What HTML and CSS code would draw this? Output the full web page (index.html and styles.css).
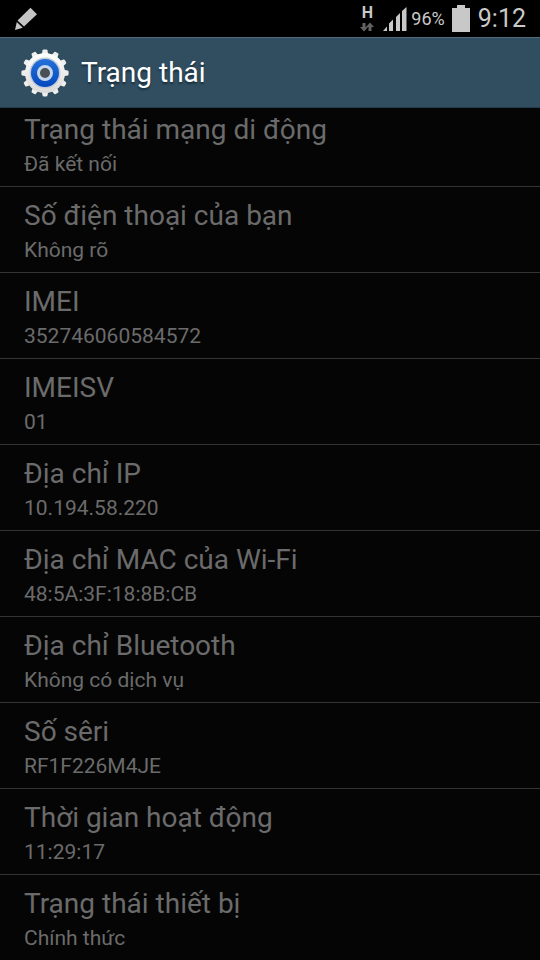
FILE: index.html
```html
<!DOCTYPE html>
<html lang="vi">
<head>
<meta charset="utf-8">
<meta name="viewport" content="width=device-width, initial-scale=1">
<title>Trạng thái</title>
<link rel="stylesheet" href="styles.css">
</head>
<body>
<div class="status-bar">
  <svg class="pen" width="24" height="24" viewBox="0 0 24 24" aria-hidden="true">
    <path fill="#c4c4c4" d="M16.500 .8 23 7.300 10 19.500 3.500 13.500ZM2.800 15 8.800 20.700 1 23Z"/>
  </svg>
  <div class="indicators">
    <div class="network">
      <span class="network-type">H</span>
      <svg width="14" height="10" viewBox="0 0 14 10" aria-hidden="true">
        <path fill="#626262" d="M2.500 1h3v4H8L4 9.500 0 5h2.500ZM8.500 9V5H6l4-4.500L14 5h-2.500v4Z"/>
      </svg>
    </div>
    <svg class="signal" width="24" height="24" viewBox="0 0 24 24" aria-hidden="true">
      <path fill="#c8c8c8" d="M0 24 4 19.500V24ZM6 24V16.500L10 12.500V24ZM13 24V10L17 6V24ZM19 24V4L23.500 0V24Z"/>
    </svg>
    <span class="battery-level">96%</span>
    <svg class="battery" width="18" height="27" viewBox="0 0 18 27" aria-hidden="true">
      <path fill="#c8c8c8" d="M5 0h8v3h5v24H0V3h5Z"/>
    </svg>
    <time class="clock">9:12</time>
  </div>
</div>
<header class="action-bar">
  <svg class="gear" width="48" height="48" viewBox="0 0 48 48" aria-hidden="true">
    <defs>
      <linearGradient id="metal" x1="0" y1="0" x2="0" y2="1">
        <stop offset="0" stop-color="#fff"/><stop offset="1" stop-color="#dcdad8"/>
      </linearGradient>
      <linearGradient id="blue" x1="0" y1="0" x2="0" y2="1">
        <stop offset="0" stop-color="#2470d8"/><stop offset="1" stop-color="#0548bd"/>
      </linearGradient>
      <path id="tooth" d="M20.500 7 21.600 1.200Q21.800 .4 22.700 .4H25.300Q26.200 .4 26.400 1.200L27.500 7Z"/>
    </defs>
    <g fill="#eeeeed">
      <use href="#tooth"/>
      <use href="#tooth" transform="rotate(30 24 24)"/>
      <use href="#tooth" transform="rotate(60 24 24)"/>
      <use href="#tooth" transform="rotate(90 24 24)"/>
      <use href="#tooth" transform="rotate(120 24 24)"/>
      <use href="#tooth" transform="rotate(150 24 24)"/>
      <use href="#tooth" transform="rotate(180 24 24)"/>
      <use href="#tooth" transform="rotate(210 24 24)"/>
      <use href="#tooth" transform="rotate(240 24 24)"/>
      <use href="#tooth" transform="rotate(270 24 24)"/>
      <use href="#tooth" transform="rotate(300 24 24)"/>
      <use href="#tooth" transform="rotate(330 24 24)"/>
    </g>
    <circle cx="24" cy="24" r="20" fill="url(#metal)"/>
    <circle cx="24" cy="24" r="15.500" fill="#c3ccda"/>
    <circle cx="24" cy="24" r="14" fill="url(#blue)"/>
    <circle cx="24" cy="24" r="6.500" fill="#4a4e55" stroke="#c3d5ea" stroke-width="3"/>
  </svg>
  <h1 class="title">Trạng thái</h1>
</header>
<main class="content">
  <dl class="list">
    <div class="row"><dt>Trạng thái mạng di động</dt><dd>Đã kết nối</dd></div>
    <div class="row"><dt>Số điện thoại của bạn</dt><dd>Không rõ</dd></div>
    <div class="row"><dt>IMEI</dt><dd>352746060584572</dd></div>
    <div class="row"><dt>IMEISV</dt><dd>01</dd></div>
    <div class="row"><dt>Địa chỉ IP</dt><dd>10.194.58.220</dd></div>
    <div class="row"><dt>Địa chỉ MAC của Wi-Fi</dt><dd>48:5A:3F:18:8B:CB</dd></div>
    <div class="row"><dt>Địa chỉ Bluetooth</dt><dd>Không có dịch vụ</dd></div>
    <div class="row"><dt>Số sêri</dt><dd>RF1F226M4JE</dd></div>
    <div class="row"><dt>Thời gian hoạt động</dt><dd>11:29:17</dd></div>
    <div class="row"><dt>Trạng thái thiết bị</dt><dd>Chính thức</dd></div>
  </dl>
</main>
</body>
</html>
```
FILE: styles.css
```css
* {
  box-sizing: border-box;
}

body {
  margin: 0;
  height: 100vh;
  display: flex;
  flex-direction: column;
  overflow: hidden;
  background: #050505;
  color: #6b6b6b;
  font-family: Roboto, "Noto Sans", sans-serif;
}

.status-bar {
  flex: none;
  height: 37px;
  padding: 0 14px;
  display: flex;
  align-items: center;
  justify-content: space-between;
  background: #000;
  color: #c8c8c8;
}

.indicators {
  display: flex;
  align-items: center;
}

.network {
  display: flex;
  flex-direction: column;
  align-items: center;
  gap: 2px;
  margin-right: 9px;
}

.network-type {
  font-size: 16px;
  font-weight: 700;
  line-height: 14px;
}

.signal {
  margin-right: 4px;
}

.battery-level {
  margin-right: 7px;
  font-size: 18px;
}

.battery {
  margin-right: 8px;
}

.clock {
  font-size: 25px;
}

.action-bar {
  flex: none;
  height: 71px;
  padding: 0 21px;
  display: flex;
  align-items: center;
  gap: 12px;
  background: #304e60;
  border-top: 1px solid #506b7a;
  border-bottom: 1px solid #263e4c;
}

.title {
  margin: 0;
  color: #fff;
  font-size: 28px;
  font-weight: 400;
  line-height: 34px;
  text-shadow: 0 2px 2px #1a2d38;
}

.content {
  flex: 1;
  min-height: 0;
  overflow-y: auto;
  scrollbar-width: none;
}

/* The list is scrolled slightly beneath the action bar. */
.list {
  margin: -7px 0 0;
}

.row {
  padding: 12px 24px 5px;
  border-bottom: 1px solid #343434;
}

.row:last-child {
  border-bottom: 0;
}

.row dt {
  font-size: 28px;
  line-height: 34px;
}

.row dd {
  margin: 0;
  font-size: 21px;
  line-height: 34px;
}
```
